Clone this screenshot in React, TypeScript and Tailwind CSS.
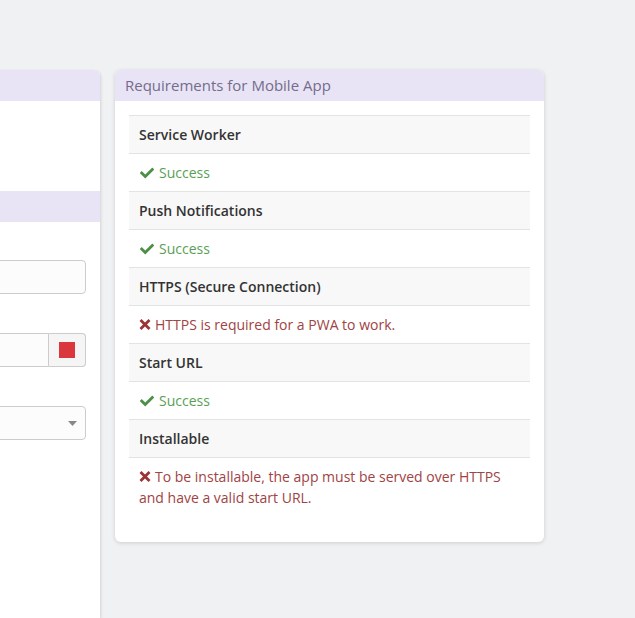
import React from "react";
import { FaCheck } from "react-icons/fa";

type Row = { title: string; ok: boolean; msg: string };

const rows: Row[] = [
  { title: "Service Worker", ok: true, msg: "Success" },
  { title: "Push Notifications", ok: true, msg: "Success" },
  { title: "HTTPS (Secure Connection)", ok: false, msg: "HTTPS is required for a PWA to work." },
  { title: "Start URL", ok: true, msg: "Success" },
  {
    title: "Installable",
    ok: false,
    msg: "To be installable, the app must be served over HTTPS and have a valid start URL.",
  },
];

function XIcon() {
  return (
    <svg
      width="12"
      height="11"
      viewBox="0 0 12 11"
      className="inline-block mr-[4px] align-[0px]"
    >
      <path d="M1.5 1 L10.5 10 M10.5 1 L1.5 10" stroke="#9b3535" strokeWidth="2.8" fill="none" />
    </svg>
  );
}

export default function App() {
  return (
    <div
      className="min-h-[618px] h-[618px] overflow-hidden bg-[#f0f1f3] flex items-start gap-[15px] pt-[70px]"
      style={{ fontFamily: '"Open Sans", "Liberation Sans", sans-serif' }}
    >
      {/* Left panel (cut off) */}
      <div className="ml-[-300px] w-[400px] h-[548px] bg-white rounded-t-[6px] shadow-[1px_1px_3px_rgba(0,0,0,0.12)] overflow-hidden flex flex-col">
        <div className="h-[31px] bg-[#e8e4f6]" />
        <div className="h-[90px]" />
        <div className="h-[31px] bg-[#e8e4f6]" />
        <div className="flex flex-col pr-[14px] pt-[38px] gap-[39px]">
          <div className="h-[34px] border border-[#cccccc] rounded-[4px] bg-[#fcfcfc]" />
          <div className="h-[34px] flex">
            <div className="flex-1 border border-[#cccccc] rounded-l-[4px] bg-[#fcfcfc]" />
            <div className="w-[37px] border border-l-0 border-[#cccccc] rounded-r-[4px] bg-[#f5f5f5] flex items-center justify-center">
              <div className="w-[16px] h-[16px] bg-[#d9363e]" />
            </div>
          </div>
          <div className="h-[34px] border border-[#cccccc] rounded-[4px] bg-[#fcfcfc] flex items-center justify-end pr-[8px]">
            <svg width="9" height="5" viewBox="0 0 9 5">
              <path d="M0 0 L9 0 L4.5 5 Z" fill="#888888" />
            </svg>
          </div>
        </div>
      </div>

      {/* Right panel */}
      <div className="w-[429px] bg-white rounded-[6px] shadow-[0_1px_4px_rgba(0,0,0,0.15)] overflow-hidden">
        <div className="h-[31px] bg-[#e8e4f6] px-[10px] flex items-center text-[15px] text-[#746c8a]">
          Requirements for Mobile App
        </div>
        <div className="px-[14px] pt-[14px] pb-[26px]">
          <div className="border-t border-[#e3e3e3]">
            {rows.map((r) => (
              <React.Fragment key={r.title}>
                <div className="bg-[#f8f8f8] border-b border-[#e3e3e3] px-[10px] py-[8px] text-[14px] leading-[21px] font-semibold text-[#333333]">
                  {r.title}
                </div>
                <div
                  className={
                    r.title === "Installable"
                      ? "px-[10px] py-[8px] text-[14px] leading-[21px]"
                      : "border-b border-[#e3e3e3] px-[10px] py-[8px] text-[14px] leading-[21px]"
                  }
                >
                  {r.ok ? (
                    <span className="text-[#5a9e55]">
                      <FaCheck className="inline-block text-[#4c9047] w-[16px] h-[14px] mr-[4px] align-[-2px]" />
                      {r.msg}
                    </span>
                  ) : (
                    <span className="text-[#a04343]">
                      <XIcon />
                      {r.msg}
                    </span>
                  )}
                </div>
              </React.Fragment>
            ))}
          </div>
        </div>
      </div>
    </div>
  );
}
